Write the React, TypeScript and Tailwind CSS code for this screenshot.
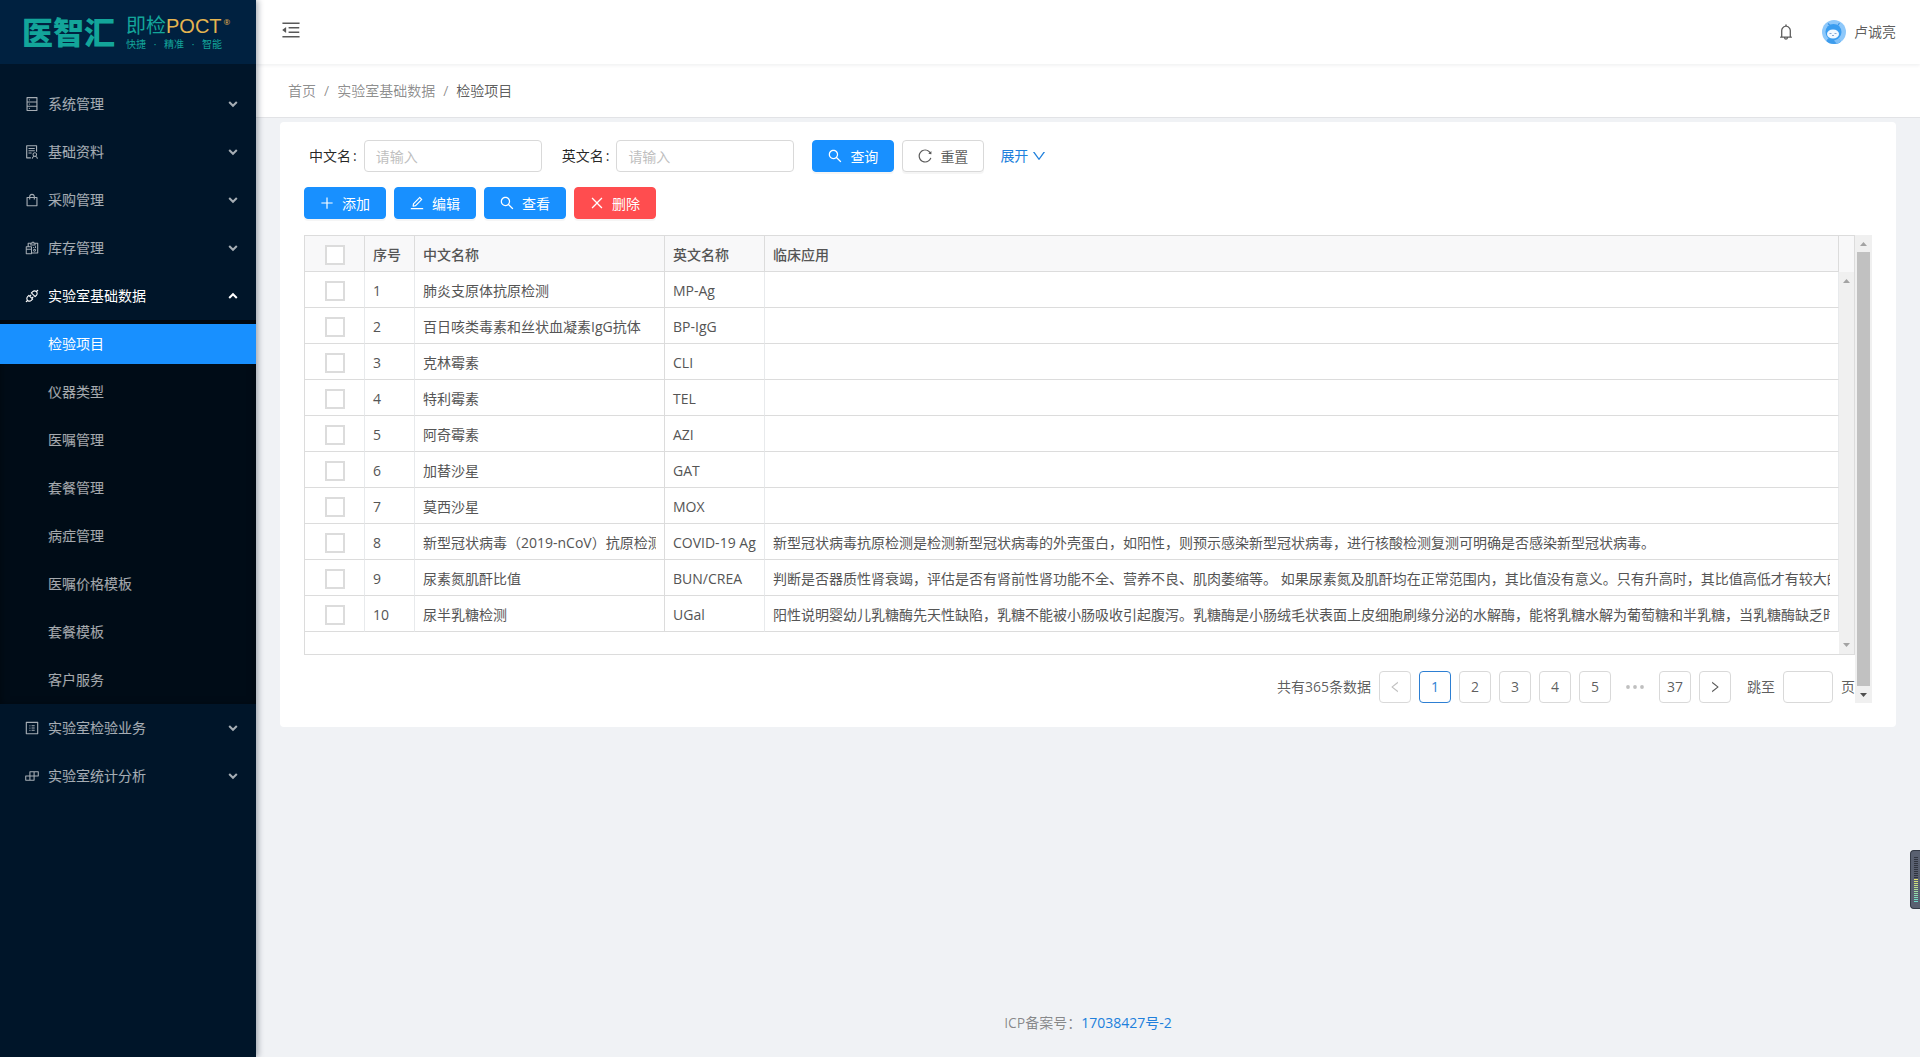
import type { ReactNode } from "react";
import type { IconType } from "react-icons";
import {
  AiOutlineApi,
  AiOutlineBell,
  AiOutlineBuild,
  AiOutlineClose,
  AiOutlineDatabase,
  AiOutlineDown,
  AiOutlineEdit,
  AiOutlineLeft,
  AiOutlineMenuFold,
  AiOutlinePlus,
  AiOutlineProfile,
  AiOutlineReconciliation,
  AiOutlineReload,
  AiOutlineRight,
  AiOutlineSearch,
  AiOutlineShopping,
  AiOutlineSolution,
} from "react-icons/ai";

type MenuGroup = {
  label: string;
  icon: IconType;
  children?: string[];
};

type Item = {
  name: string;
  code: string;
  usage: string;
};

const MENU: MenuGroup[] = [
  { label: "系统管理", icon: AiOutlineDatabase },
  { label: "基础资料", icon: AiOutlineSolution },
  { label: "采购管理", icon: AiOutlineShopping },
  { label: "库存管理", icon: AiOutlineReconciliation },
  {
    label: "实验室基础数据",
    icon: AiOutlineApi,
    children: [
      "检验项目",
      "仪器类型",
      "医嘱管理",
      "套餐管理",
      "病症管理",
      "医嘱价格模板",
      "套餐模板",
      "客户服务",
    ],
  },
  { label: "实验室检验业务", icon: AiOutlineProfile },
  { label: "实验室统计分析", icon: AiOutlineBuild },
];

const ACTIVE_ITEM = "检验项目";

const ITEMS: Item[] = [
  { name: "肺炎支原体抗原检测", code: "MP-Ag", usage: "" },
  { name: "百日咳类毒素和丝状血凝素IgG抗体", code: "BP-IgG", usage: "" },
  { name: "克林霉素", code: "CLI", usage: "" },
  { name: "特利霉素", code: "TEL", usage: "" },
  { name: "阿奇霉素", code: "AZI", usage: "" },
  { name: "加替沙星", code: "GAT", usage: "" },
  { name: "莫西沙星", code: "MOX", usage: "" },
  {
    name: "新型冠状病毒（2019-nCoV）抗原检测",
    code: "COVID-19 Ag",
    usage:
      "新型冠状病毒抗原检测是检测新型冠状病毒的外壳蛋白，如阳性，则预示感染新型冠状病毒，进行核酸检测复测可明确是否感染新型冠状病毒。",
  },
  {
    name: "尿素氮肌酐比值",
    code: "BUN/CREA",
    usage:
      "判断是否器质性肾衰竭，评估是否有肾前性肾功能不全、营养不良、肌肉萎缩等。 如果尿素氮及肌酐均在正常范围内，其比值没有意义。只有升高时，其比值高低才有较大的",
  },
  {
    name: "尿半乳糖检测",
    code: "UGal",
    usage:
      "阳性说明婴幼儿乳糖酶先天性缺陷，乳糖不能被小肠吸收引起腹泻。乳糖酶是小肠绒毛状表面上皮细胞刷缘分泌的水解酶，能将乳糖水解为葡萄糖和半乳糖，当乳糖酶缺乏时",
  },
];

function Caret({ up = false, className = "" }: { up?: boolean; className?: string }) {
  return (
    <svg viewBox="0 0 10 8" className={`h-2 w-[10px] ${className}`} aria-hidden="true">
      <path
        d={up ? "M1.2 6 5 2.2 8.8 6" : "M1.2 2 5 5.8 8.8 2"}
        fill="none"
        stroke="currentColor"
        strokeWidth="2"
      />
    </svg>
  );
}

function Logo() {
  return (
    <div className="flex h-16 items-center gap-[11px] bg-[#002140] pl-[22px] text-[#13a59a]">
      <span className="text-[31px] leading-8 font-black">医智汇</span>
      <div className="flex flex-col">
        <div className="flex h-6 items-center text-[20px] leading-6">
          <span>即检</span>
          <span className="font-['Liberation_Sans',sans-serif] text-[#e5b550]">POCT</span>
          <sup className="ml-[2px] text-[8px] leading-none text-[#e5b550]">®</sup>
        </div>
        <div className="flex h-3 w-24 justify-between text-[10px] leading-3">
          <span>快捷</span>
          <span>·</span>
          <span>精准</span>
          <span>·</span>
          <span>智能</span>
        </div>
      </div>
    </div>
  );
}

function Sidebar() {
  return (
    <aside className="z-10 w-64 shrink-0 bg-[#001529] shadow-[2px_0_6px_rgba(0,21,41,0.35)]">
      <Logo />
      <nav className="pt-4">
        {MENU.map(({ label, icon: Icon, children }) => (
          <div key={label}>
            <button
              type="button"
              aria-expanded={Boolean(children)}
              className={`flex h-12 w-full items-center gap-2 pr-[18px] pl-6 ${
                children ? "text-white" : "text-white/65"
              }`}
            >
              <Icon className="size-4" />
              <span className="flex-1 text-left">{label}</span>
              <Caret up={Boolean(children)} />
            </button>
            {children ? (
              <ul className="bg-[#000c17] shadow-[inset_0_2px_8px_rgba(0,0,0,0.45)]">
                {children.map((child) => (
                  <li key={child} className="py-1">
                    <a
                      href="#"
                      className={`flex h-10 items-center pl-12 ${
                        child === ACTIVE_ITEM ? "bg-[#1890ff] text-white" : "text-white/65"
                      }`}
                    >
                      {child}
                    </a>
                  </li>
                ))}
              </ul>
            ) : null}
          </div>
        ))}
      </nav>
    </aside>
  );
}

function Avatar() {
  return (
    <svg viewBox="0 0 24 24" className="size-6" aria-hidden="true">
      <defs>
        <clipPath id="avatar-clip">
          <circle cx="12" cy="12" r="12" />
        </clipPath>
      </defs>
      <g clipPath="url(#avatar-clip)">
        <rect width="24" height="24" fill="#8ec8fa" />
        <path d="M6 3.5 8.5 6M17.5 3 15.5 6" stroke="#3b93e6" strokeWidth="1.2" />
        <path d="M4 24c0-5 3-7 7-7s8 2 8 7z" fill="#3d9cec" />
        <circle cx="11.5" cy="12" r="8" fill="#3a9df0" />
        <ellipse cx="11" cy="14" rx="6" ry="4.6" fill="#f4f9ff" />
        <path d="M7.5 13.5h2M12.5 13.5h2M10 15.5h2" stroke="#7d9fd0" strokeWidth="0.9" />
        <path d="M12 20.5 17 18.5l2 3.5-4 2z" fill="#7fc0f8" />
      </g>
    </svg>
  );
}

function Header() {
  return (
    <header className="z-[1] flex h-16 items-center justify-between bg-white px-6 shadow-[0_1px_4px_rgba(0,21,41,0.08)]">
      <button type="button" aria-label="收起菜单" className="pb-1 text-black/65">
        <AiOutlineMenuFold className="size-[22px]" />
      </button>
      <div className="flex items-center">
        <button type="button" aria-label="通知" className="mr-[27px] text-black/65">
          <AiOutlineBell className="size-[18px]" />
        </button>
        <button type="button" className="flex items-center gap-2">
          <Avatar />
          <span>卢诚亮</span>
        </button>
      </div>
    </header>
  );
}

function Breadcrumb() {
  return (
    <nav
      aria-label="面包屑"
      className="flex h-[54px] items-center border-b border-[#e2e3e6] bg-white pl-8 text-black/45"
    >
      <a href="#">首页</a>
      <span className="mx-2">/</span>
      <a href="#">实验室基础数据</a>
      <span className="mx-2">/</span>
      <span className="text-black/65">检验项目</span>
    </nav>
  );
}

function SearchField({ id, label }: { id: string; label: string }) {
  return (
    <div className="flex items-center">
      <label htmlFor={id} className="mr-[7px] text-black/85">
        {label}
        <span className="ml-[2px]">:</span>
      </label>
      <input
        id={id}
        type="text"
        placeholder="请输入"
        className="h-8 w-[178px] rounded border border-[#d9d9d9] px-[11px] placeholder:text-[#bfbfbf]"
      />
    </div>
  );
}

function ActionButton({
  icon: Icon,
  tone = "primary",
  children,
}: {
  icon: IconType;
  tone?: "primary" | "danger" | "plain";
  children: ReactNode;
}) {
  const tones = {
    primary: "border-[#1890ff] bg-[#1890ff] text-white",
    danger: "border-[#ff4d4f] bg-[#ff4d4f] text-white",
    plain: "border-[#d9d9d9] bg-white text-black/65",
  };
  return (
    <button
      type="button"
      className={`flex h-8 items-center gap-[7px] rounded border pr-[15px] pl-[14px] shadow-[0_2px_0_rgba(0,0,0,0.04)] ${tones[tone]}`}
    >
      <Icon className="size-4" />
      <span className="pt-[2px]">{children}</span>
    </button>
  );
}

function ScrollArrow({ down = false, className = "" }: { down?: boolean; className?: string }) {
  return (
    <svg viewBox="0 0 7 4" className={`h-1 w-[7px] ${className}`} aria-hidden="true">
      <path d={down ? "M0 0h7L3.5 4z" : "M0 4h7L3.5 0z"} fill="currentColor" />
    </svg>
  );
}

function CheckCell({ label }: { label: string }) {
  return (
    <input
      type="checkbox"
      aria-label={label}
      className="mx-auto block size-5 appearance-none border-2 border-[#dcdcdc] bg-white"
    />
  );
}

function ItemTable() {
  return (
    <div className="flex border border-[#dcdcdc]">
      <div className="min-w-0 flex-1 pb-[22px]">
        <table className="w-full table-fixed border-separate border-spacing-0 text-left text-[#555]">
          <colgroup>
            <col className="w-[60px]" />
            <col className="w-[50px]" />
            <col className="w-[250px]" />
            <col className="w-[100px]" />
            <col />
          </colgroup>
          <thead className="bg-[#f8f8f9]">
            <tr className="[&>th]:h-9 [&>th]:border-r [&>th]:border-b [&>th]:border-[#dcdcdc] [&>th]:pt-[2px] [&>th]:font-medium">
              <th>
                <CheckCell label="全选" />
              </th>
              <th className="px-2">序号</th>
              <th className="px-2">中文名称</th>
              <th className="px-2">英文名称</th>
              <th className="px-2">临床应用</th>
            </tr>
          </thead>
          <tbody>
            {ITEMS.map((item, index) => (
              <tr
                key={item.name}
                className="[&>td]:h-9 [&>td]:border-r [&>td]:border-b [&>td]:border-[#dcdcdc] [&>td]:border-r-[#e8eaec] [&>td]:pt-[2px]"
              >
                <td>
                  <CheckCell label={item.name} />
                </td>
                <td className="px-2">{index + 1}</td>
                <td className="border-r-[#dcdcdc]! px-2">
                  <div className="overflow-hidden whitespace-nowrap">{item.name}</div>
                </td>
                <td className="px-2 whitespace-nowrap">{item.code}</td>
                <td className="px-2">
                  <div className="overflow-hidden whitespace-nowrap">{item.usage}</div>
                </td>
              </tr>
            ))}
          </tbody>
        </table>
      </div>
      <div className="flex w-[15px] flex-col">
        <div className="h-9 bg-[#f8f8f9]" />
        <div className="flex flex-1 flex-col items-center justify-between bg-[#f0f0f0] py-[7px] text-[#a3a3a3]">
          <ScrollArrow />
          <ScrollArrow down />
        </div>
      </div>
    </div>
  );
}

function PageButton({
  active = false,
  disabled = false,
  label,
  children,
}: {
  active?: boolean;
  disabled?: boolean;
  label?: string;
  children: ReactNode;
}) {
  return (
    <button
      type="button"
      aria-label={label}
      aria-current={active ? "page" : undefined}
      disabled={disabled}
      className={`flex size-8 items-center justify-center rounded border bg-white ${
        active ? "border-[#2d7fd3] text-[#2d7fd3]" : "border-[#d9d9d9]"
      } ${disabled ? "text-black/25" : ""}`}
    >
      {children}
    </button>
  );
}

function Pagination() {
  return (
    <div className="mt-4 flex items-center justify-end gap-2">
      <span>共有365条数据</span>
      <PageButton label="上一页" disabled>
        <AiOutlineLeft className="size-[14px]" />
      </PageButton>
      <PageButton active>1</PageButton>
      <PageButton>2</PageButton>
      <PageButton>3</PageButton>
      <PageButton>4</PageButton>
      <PageButton>5</PageButton>
      <span className="flex w-8 justify-center text-black/25">
        <svg viewBox="0 0 18 4" className="h-1 w-[18px]" fill="currentColor" aria-hidden="true">
          <circle cx="2" cy="2" r="1.9" />
          <circle cx="9" cy="2" r="1.9" />
          <circle cx="16" cy="2" r="1.9" />
        </svg>
      </span>
      <PageButton>37</PageButton>
      <PageButton label="下一页">
        <AiOutlineRight className="size-[14px]" />
      </PageButton>
      <label htmlFor="page-jump" className="ml-2">
        跳至
      </label>
      <input
        id="page-jump"
        type="text"
        className="h-8 w-[50px] rounded border border-[#d9d9d9] px-2"
      />
      <span>页</span>
    </div>
  );
}

function LevelMeter() {
  return (
    <div className="fixed top-[850px] right-0 z-20 flex h-[59px] w-[10px] flex-col justify-center rounded-l border border-r-0 border-[#343a46] bg-[#596070] pl-[3px]">
      <div className="h-[22px] w-1 bg-[repeating-linear-gradient(to_bottom,#30343f_0_1px,#596070_1px_2px)]" />
      <div className="h-6 w-1 bg-[repeating-linear-gradient(to_bottom,transparent_0_1px,#596070_1px_2px),linear-gradient(to_bottom,#e6e36a,#62d8cf)]" />
    </div>
  );
}

export default function App() {
  return (
    <div className="flex min-h-screen bg-[#f0f2f5] font-['Open_Sans','Noto_Sans_CJK_SC',sans-serif] text-sm text-black/65">
      <Sidebar />
      <div className="flex min-w-0 flex-1 flex-col">
        <Header />
        <Breadcrumb />
        <main className="mx-6 mt-1 flex-1">
          <section className="rounded-sm bg-white px-6 pt-[18px] pb-6">
            <form className="flex items-center gap-2 pl-[5px]">
              <SearchField id="name-cn" label="中文名" />
              <div className="ml-3">
                <SearchField id="name-en" label="英文名" />
              </div>
              <div className="ml-[10px] flex items-center gap-2">
                <ActionButton icon={AiOutlineSearch}>查询</ActionButton>
                <ActionButton icon={AiOutlineReload} tone="plain">
                  重置
                </ActionButton>
                <a href="#" className="ml-2 flex items-center gap-[3px] text-[#2080dc]">
                  展开
                  <AiOutlineDown className="size-4" />
                </a>
              </div>
            </form>
            <div className="mt-[15px] flex gap-2">
              <ActionButton icon={AiOutlinePlus}>添加</ActionButton>
              <ActionButton icon={AiOutlineEdit}>编辑</ActionButton>
              <ActionButton icon={AiOutlineSearch}>查看</ActionButton>
              <ActionButton icon={AiOutlineClose} tone="danger">
                删除
              </ActionButton>
            </div>
            <div className="mt-4 flex">
              <div className="min-w-0 flex-1">
                <ItemTable />
                <Pagination />
              </div>
              <div className="flex w-[17px] flex-col items-center bg-[#f0f0f0]">
                <div className="flex h-[17px] items-center text-[#a3a3a3]">
                  <ScrollArrow />
                </div>
                <div className="w-[13px] flex-1 bg-[#c1c1c1]" />
                <div className="flex h-[17px] items-center text-[#505050]">
                  <ScrollArrow down />
                </div>
              </div>
            </div>
          </section>
        </main>
        <footer className="pb-6 text-center text-black/45">
          ICP备案号：
          <a href="#" className="text-[#2080dc]">
            17038427号-2
          </a>
        </footer>
      </div>
      <LevelMeter />
    </div>
  );
}
